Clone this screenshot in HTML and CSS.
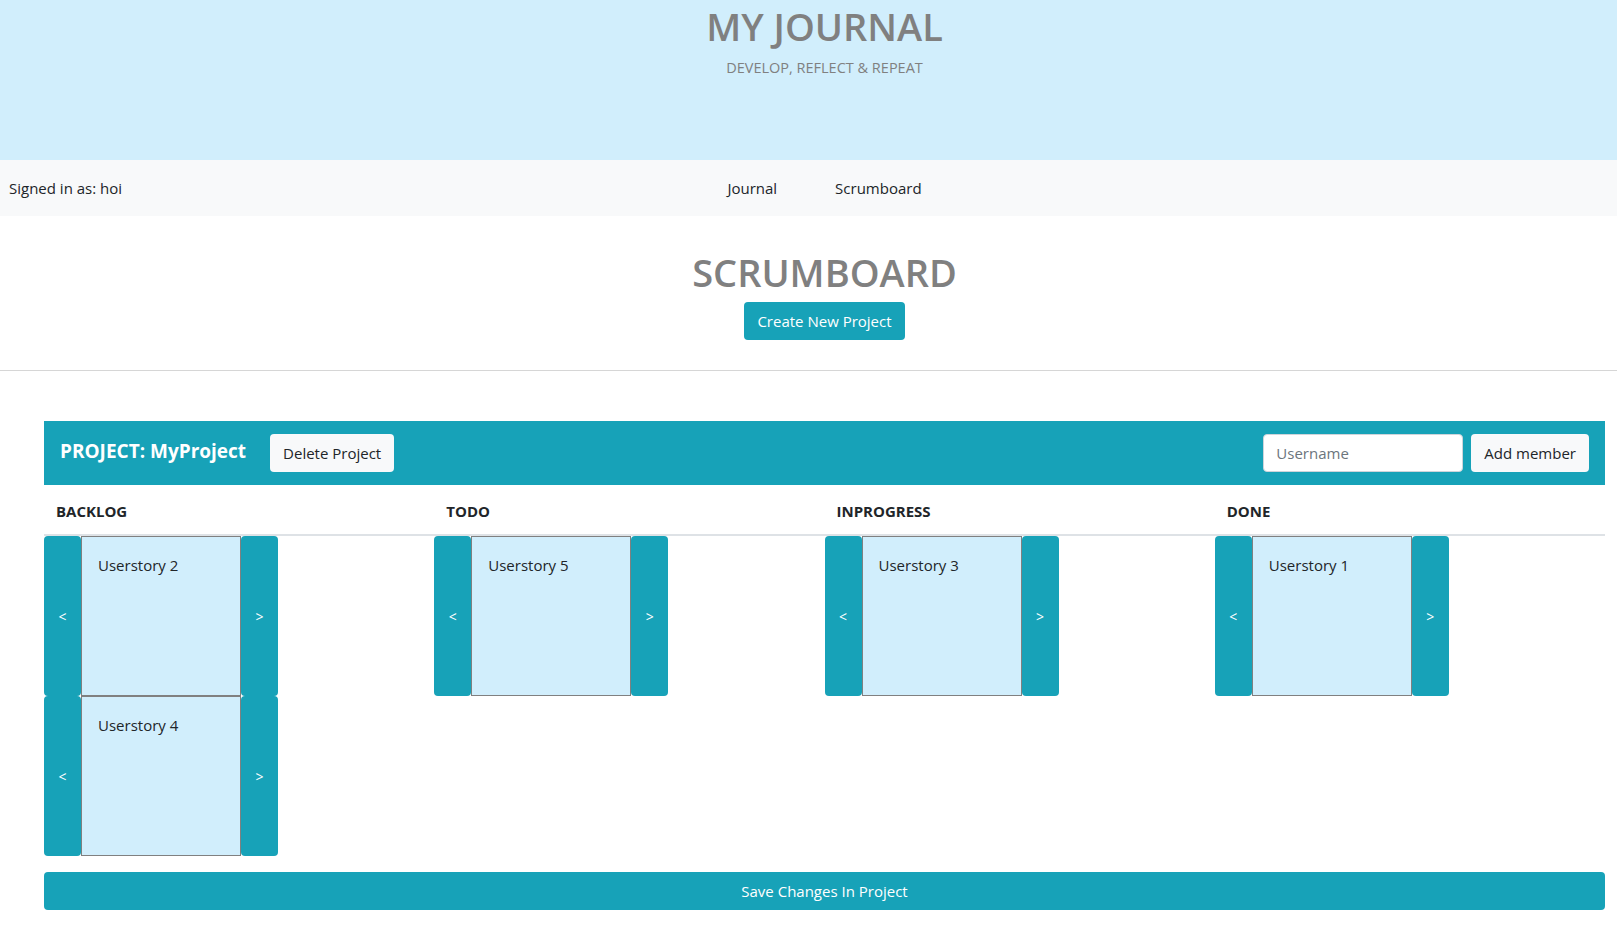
FILE: index.html
```html
<!DOCTYPE html>
<html lang="en">
<head>
<meta charset="utf-8">
<title>My Journal - Scrumboard</title>
<link rel="stylesheet" href="styles.css">
</head>
<body>
<header class="hero">
  <h1 class="hero-title">MY JOURNAL</h1>
  <p class="hero-sub">DEVELOP, REFLECT &amp; REPEAT</p>
</header>
<nav class="topnav">
  <div class="nav-user">Signed in as: hoi</div>
  <div class="nav-links">
    <a class="nav-link" href="#">Journal</a>
    <a class="nav-link" href="#">Scrumboard</a>
  </div>
  <div></div>
</nav>
<section class="page-head">
  <h2 class="page-title">SCRUMBOARD</h2>
  <button class="btn btn-info">Create New Project</button>
</section>
<hr class="divider">
<main class="project">
  <div class="project-bar">
    <div class="project-left">
      <h3 class="project-name">PROJECT: MyProject</h3>
      <button class="btn btn-light">Delete Project</button>
    </div>
    <div class="project-right">
      <input class="input" type="text" placeholder="Username">
      <button class="btn btn-light">Add member</button>
    </div>
  </div>
  <div class="board">
    <div class="col-head">BACKLOG</div>
    <div class="col-head">TODO</div>
    <div class="col-head">INPROGRESS</div>
    <div class="col-head">DONE</div>
    <div class="col">
      <div class="story"><button class="arrow">&lt;</button><div class="story-body">Userstory 2</div><button class="arrow">&gt;</button></div>
      <div class="story"><button class="arrow">&lt;</button><div class="story-body">Userstory 4</div><button class="arrow">&gt;</button></div>
    </div>
    <div class="col">
      <div class="story"><button class="arrow">&lt;</button><div class="story-body">Userstory 5</div><button class="arrow">&gt;</button></div>
    </div>
    <div class="col">
      <div class="story"><button class="arrow">&lt;</button><div class="story-body">Userstory 3</div><button class="arrow">&gt;</button></div>
    </div>
    <div class="col">
      <div class="story"><button class="arrow">&lt;</button><div class="story-body">Userstory 1</div><button class="arrow">&gt;</button></div>
    </div>
  </div>
  <button class="btn btn-info btn-block">Save Changes In Project</button>
</main>
</body>
</html>
```
FILE: styles.css
```css
* { box-sizing: border-box; }
body {
  margin: 0;
  font-family: "Open Sans", "Noto Sans", sans-serif;
  font-size: 15px;
  color: #212529;
  background: #fff;
}
.hero {
  height: 160px;
  background: #d1eefc;
  text-align: center;
  padding: 2px 0 0 32px;
}
.hero-title {
  margin: 0;
  font-size: 38px;
  font-weight: 600;
  color: #808080;
  line-height: 48px;
}
.hero-sub {
  margin: 7px 0 0;
  font-size: 14.5px;
  color: #808080;
  line-height: 22px;
}
.topnav {
  height: 56px;
  background: #f8f9fa;
  display: grid;
  grid-template-columns: 1fr auto 1fr;
  align-items: center;
  padding: 0 9px;
}
.nav-links {
  display: flex;
  gap: 58px;
  padding-left: 32px;
}
.nav-link {
  color: #212529;
  text-decoration: none;
}
.page-head {
  text-align: center;
  padding: 32px 0 0 32px;
}
.page-title {
  margin: 0 0 6px;
  font-size: 38px;
  font-weight: 600;
  color: #808080;
  line-height: 48px;
}
.btn {
  font-family: inherit;
  font-size: 15px;
  line-height: 22px;
  padding: 7px 12px;
  border: 1px solid transparent;
  border-radius: 4px;
  cursor: pointer;
}
.btn-info {
  background: #17a2b8;
  color: #fff;
}
.btn-light {
  background: #f8f9fa;
  color: #212529;
}
.divider {
  margin: 30px 0 0;
  border: 0;
  border-top: 1px solid #d6d6d6;
}
.project {
  margin: 50px 12px 20px 44px;
}
.project-bar {
  background: #17a2b8;
  height: 64px;
  display: flex;
  align-items: center;
  justify-content: space-between;
  padding: 0 16px;
}
.project-left {
  display: flex;
  align-items: center;
  gap: 24px;
}
.project-name {
  margin: 0 0 4px;
  color: #fff;
  font-size: 19px;
  font-weight: 700;
}
.project-right {
  display: flex;
  gap: 8px;
}
.input {
  width: 200px;
  height: 38px;
  padding: 6px 12px;
  font-family: inherit;
  font-size: 15px;
  border: 1px solid #ced4da;
  border-radius: 4px;
  color: #495057;
}
.input::placeholder { color: #6c757d; }
.board {
  display: grid;
  grid-template-columns: repeat(4, 1fr);
  margin-bottom: 16px;
}
.col-head {
  font-weight: 700;
  font-size: 15px;
  padding: 15px 12px 12px;
  border-bottom: 2px solid #dee2e6;
  line-height: 22px;
}
.col {
  display: flex;
  flex-direction: column;
}
.story {
  display: flex;
  height: 160px;
}
.arrow {
  width: 37px;
  background: #17a2b8;
  color: #fff;
  border: 0;
  border-radius: 4px;
  font-family: inherit;
  font-size: 14px;
  padding: 0;
}
.story-body {
  width: 160px;
  background: #d1eefc;
  border: 1px solid #808080;
  padding: 17px 16px;
  line-height: 22px;
}
.btn-block {
  display: block;
  width: 100%;
}
```
